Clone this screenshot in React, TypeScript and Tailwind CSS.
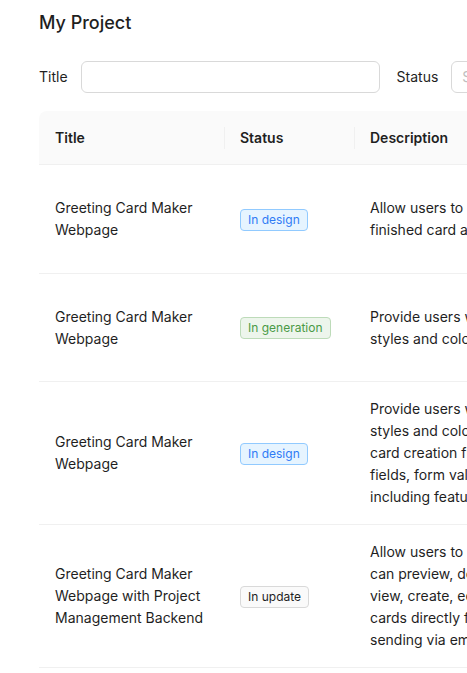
import React from "react";

type Status = "design" | "generation" | "update";

interface Project {
  title: string;
  status: Status;
  description: string[];
  rowClass?: string;
}

const projects: Project[] = [
  {
    title: "Greeting Card Maker Webpage",
    status: "design",
    description: [
      "Allow users to select a template, customize the message and",
      "finished card as an image or share it with friends.",
    ],
    rowClass: "min-h-[109px]",
  },
  {
    title: "Greeting Card Maker Webpage",
    status: "generation",
    description: [
      "Provide users with a set of card templates in different",
      "styles and colors to pick from before editing.",
    ],
    rowClass: "min-h-[108px]",
  },
  {
    title: "Greeting Card Maker Webpage",
    status: "design",
    description: [
      "Provide users with a set of card templates in different",
      "styles and colors, and guide them through a step-by-step",
      "card creation flow with recipient, sender and message",
      "fields, form validation and a live preview of the card,",
      "including features such as fonts, stickers and backgrounds.",
    ],
  },
  {
    title: "Greeting Card Maker Webpage with Project Management Backend",
    status: "update",
    description: [
      "Allow users to create cards from templates so that they",
      "can preview, download and share them, and let admins",
      "view, create, edit and delete templates and manage the",
      "cards directly from a backend dashboard, with support for",
      "sending via email and tracking delivery status.",
    ],
  },
];

const StatusTag: React.FC<{ status: Status }> = ({ status }) => {
  switch (status) {
    case "design":
      return (
        <span className="inline-block px-[7px] text-xs leading-5 rounded border border-[#91caff] bg-[#e6f4ff] text-[#2f7bf5]">
          In design
        </span>
      );
    case "generation":
      return (
        <span className="inline-block px-[7px] text-xs leading-5 rounded border border-[#bddbb9] bg-[#edf5ec] text-[#4a9a46]">
          In generation
        </span>
      );
    default:
      return (
        <span className="inline-block px-[7px] text-xs leading-5 rounded border border-[#d9d9d9] bg-[#fafafa] text-[#1f1f1f]">
          In update
        </span>
      );
  }
};

export default function App() {
  return (
    <div
      className="w-full overflow-hidden bg-white text-[#1f1f1f]"
      style={{ fontFamily: "Inter, 'Noto Sans', sans-serif" }}
    >
      <div className="w-[900px] pl-[39px] pt-[9px]">
        <h1 className="text-lg leading-7 font-medium text-[#1f1f1f]">
          My Project
        </h1>

        <div className="flex items-center mt-6 text-sm">
          <label className="mr-[13px]">Title</label>
          <input
            className="w-[299px] h-8 rounded-md border border-[#d9d9d9] px-3 outline-none"
            type="text"
          />
          <label className="ml-[17px] mr-[13px]">Status</label>
          <div className="w-[200px] h-8 rounded-md border border-[#d9d9d9] px-[10px] flex items-center text-[#bfbfbf]">
            Select status
          </div>
        </div>

        <div className="mt-[18px] w-[820px] text-sm">
          <div className="grid grid-cols-[185px_130px_1fr] h-[54px] items-center bg-[#fafafa] rounded-tl-lg rounded-tr-lg border-b border-[#f0f0f0] font-semibold">
            <div className="px-4">Title</div>
            <div className="px-4 relative">
              <span className="absolute left-0 top-1/2 -translate-y-1/2 h-[22px] w-px bg-[#f0f0f0]" />
              Status
            </div>
            <div className="px-4 relative">
              <span className="absolute left-0 top-1/2 -translate-y-1/2 h-[22px] w-px bg-[#f0f0f0]" />
              Description
            </div>
          </div>

          {projects.map((p, i) => (
            <div
              key={i}
              className={`grid grid-cols-[185px_130px_1fr] items-center border-b border-[#f0f0f0] leading-[22px] ${
                p.rowClass ?? ""
              }`}
            >
              <div className="px-4 py-4">{p.title}</div>
              <div className="px-4 py-4">
                <StatusTag status={p.status} />
              </div>
              <div className="px-4 py-4">
                {p.description.map((line, j) => (
                  <div key={j} className="whitespace-nowrap">
                    {line}
                  </div>
                ))}
              </div>
            </div>
          ))}
        </div>
      </div>
    </div>
  );
}
